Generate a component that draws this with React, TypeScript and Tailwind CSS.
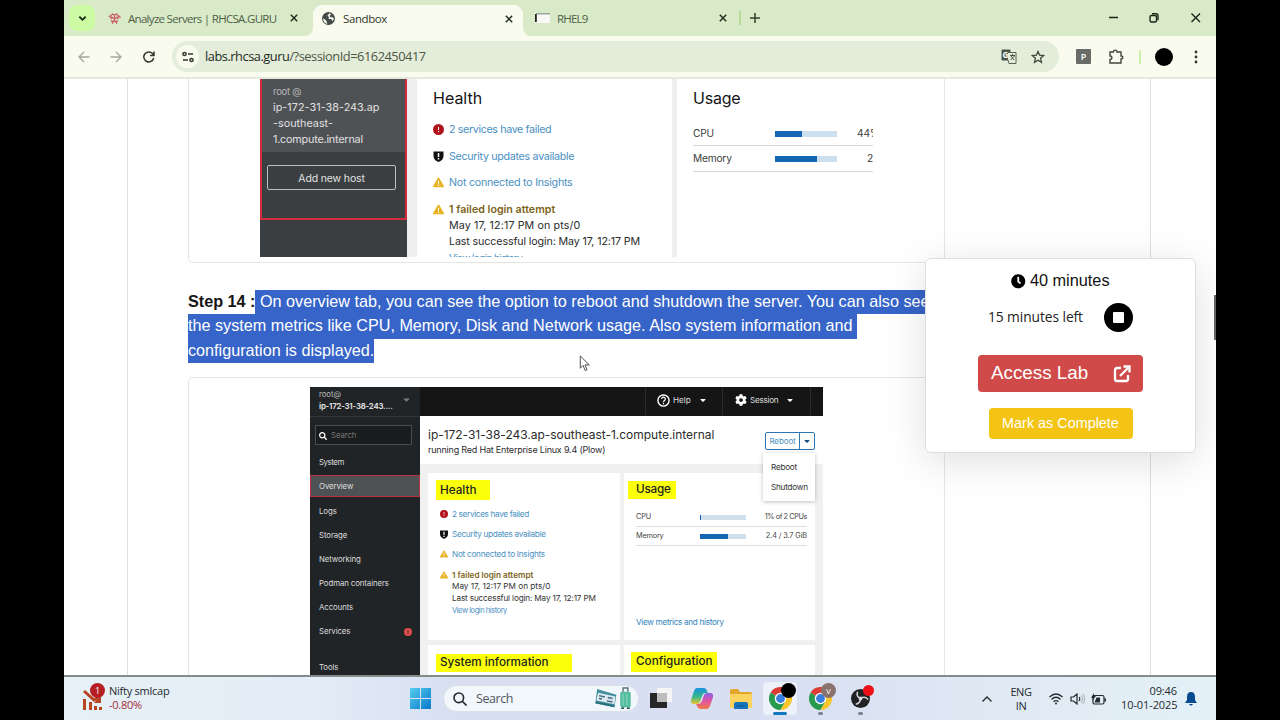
import type { ReactNode } from "react";
import { FaClock, FaCog, FaSearch } from "react-icons/fa";
import { FaCaretDown, FaCircleExclamation, FaTriangleExclamation } from "react-icons/fa6";

const navItems = ["Logs", "Storage", "Networking", "Podman containers", "Accounts"] as const;

function ShieldIcon({ className }: { className: string }) {
  return (
    <svg viewBox="0 0 20 22" className={className}>
      <path d="M0 1h20v9c0 6-4 10-10 12C4 20 0 16 0 10Z" fill="#111" />
      <path d="M8.5 4h3v8h-3zM8.5 14h3v3h-3z" fill="#fff" />
    </svg>
  );
}

function CloseIcon() {
  return (
    <svg viewBox="0 0 10 10" className="h-[8px] w-[8px] shrink-0">
      <path d="M1 1l8 8M9 1L1 9" stroke="#222b1e" strokeWidth="1.8" />
    </svg>
  );
}

function TabStrip() {
  return (
    <div className="flex h-9 items-center bg-[#d9eac9] text-[11.5px] text-[#4e5f46]">
      <div className="ml-[5px] flex h-[26px] w-[26px] items-center justify-center rounded-lg bg-[#cdfaa5]">
        <svg viewBox="0 0 10 10" className="h-[9px] w-[9px]" fill="none" stroke="#17210f" strokeWidth="2">
          <path d="M1.5 3l3.5 3.5L8.5 3" />
        </svg>
      </div>
      <svg viewBox="0 0 24 22" className="ml-[13px] h-[11px] w-[13px]" fill="none" stroke="#c9636b" strokeWidth="2.6">
        <path d="M1 8C3 4 7 5 8 2c3 2 6 2 8 0 1 3 5 2 7 6-3-1-5 0-6 1M1 8c3-1 5 0 6 1M4 12l4-3 4 3 4-3 4 3M6 14l2 6 4-6 4 6 2-6M12 5v5" />
      </svg>
      <span className="ml-[7px] w-[148px] pt-[2px] tracking-[-0.7px] whitespace-nowrap">Analyze Servers | RHCSA.GURU</span>
      <span className="ml-[14px]"><CloseIcon /></span>
      <div className="relative ml-[15px] flex h-[31px] w-[210px] items-center self-end rounded-t-[9px] bg-[#f9fbef] pr-[10px] pb-[4px] pl-[9px] text-[#30382b]">
        <svg viewBox="0 0 8 8" className="absolute bottom-0 -left-2 h-2 w-2"><path d="M8 0v8H0a8 8 0 0 0 8-8" fill="#f9fbef" /></svg>
        <svg viewBox="0 0 8 8" className="absolute -right-2 bottom-0 h-2 w-2"><path d="M0 0v8h8a8 8 0 0 1-8-8" fill="#f9fbef" /></svg>
        <svg viewBox="0 0 24 24" className="mb-px h-[13px] w-[13px]">
          <circle cx="12" cy="12" r="12" fill="#454b48" />
          <path d="M3 12l5 4 2 6c-5-1-8-5-8-9zM14 2l-4 5 3 2-1 4 5 0 3 4 2-5-3-3-3 1-2-3 3-2z" fill="#f9fbef" />
        </svg>
        <span className="ml-[8px] flex-1 pt-px tracking-[-0.4px]">Sandbox</span>
        <CloseIcon />
      </div>
      <svg viewBox="0 0 15 10" className="ml-[12px] h-[10px] w-[15px]">
        <path d="M0 0h15v10H0z" fill="#f8f8f6" />
        <path d="M1 0h14v1.500H1z" fill="#9aa59a" />
        <path d="M0 1h1.800v8H0z" fill="#222" />
      </svg>
      <span className="ml-[7px] w-[152px] pt-[2px] tracking-[-0.8px]">RHEL9</span>
      <span className="ml-[10px]"><CloseIcon /></span>
      <div className="ml-[12px] h-[14px] w-[2px] bg-[#b9dc95]" />
      <svg viewBox="0 0 10 10" className="ml-[9px] h-[10px] w-[10px]"><path d="M5 0v10M0 5h10" stroke="#33402c" strokeWidth="1.5" /></svg>
      <svg viewBox="0 0 92 12" className="ml-auto mr-[15px] h-[12px] w-[92px]" fill="none" stroke="#1c2417" strokeWidth="1.4">
        <path d="M0 5.500h9M82.500 1.500l8.500 8.500M91 1.500L82.500 10" />
        <rect x="41" y="3.5" width="6.5" height="6.5" rx="1.5" />
        <path d="M43 1.800h4a2 2 0 0 1 2 2v4.500" />
      </svg>
    </div>
  );
}

function Toolbar() {
  return (
    <div className="flex h-[41px] items-center bg-[#f9fbef]">
      <svg viewBox="0 0 12 12" className="ml-[14px] h-[12px] w-[12px]" fill="none" stroke="#a3a99b" strokeWidth="1.4"><path d="M11.500 6H1M6 1L1 6l5 5" /></svg>
      <svg viewBox="0 0 12 12" className="ml-[20px] h-[12px] w-[12px]" fill="none" stroke="#a3a99b" strokeWidth="1.4"><path d="M.5 6H11M6 1l5 5-5 5" /></svg>
      <svg viewBox="0 0 12 12" className="ml-[21px] h-[12px] w-[12px]" fill="none" stroke="#30382b" strokeWidth="1.5"><path d="M10.700 7A5 5 0 1 1 9.500 2.500L11 4M11 .5V4.500H7" /></svg>
      <div className="ml-[17px] flex h-[31px] w-[887px] items-center rounded-full bg-[#e4edda] pr-[14px] pl-[4px]">
        <div className="flex h-[23px] w-[23px] items-center justify-center rounded-full bg-[#f9fbef]">
          <svg viewBox="0 0 12 12" className="h-[12px] w-[12px]" fill="none" stroke="#30382b" strokeWidth="1.5">
            <circle cx="2.5" cy="3" r="1.6" /><circle cx="9.5" cy="9" r="1.6" /><path d="M6 3h5M1 9h5" />
          </svg>
        </div>
        <span className="ml-[6px] flex-1 pt-px text-[12.8px] tracking-[-0.46px] text-[#4d5746]"><span className="text-[#222a1d]">labs.rhcsa.guru</span>/?sessionId=6162450417</span>
        <svg viewBox="0 0 16 15" className="h-[15px] w-[16px]">
          <rect x=".5" y=".5" width="9" height="11" rx="1" fill="#4b5346" />
          <path d="M7 3.500h8v11H8L7 11" fill="#e4edda" stroke="#5a6255" />
          <text x="1.5" y="8.5" className="text-[8px] font-bold" fill="#fff">G</text>
          <path d="M9 6.500h5M11.500 5v1.500M10 7l3 4M13.500 7l-4 4" stroke="#4b5346" fill="none" />
        </svg>
        <svg viewBox="0 0 14 14" className="ml-[14px] h-[14px] w-[14px]" fill="none" stroke="#3f4839" strokeWidth="1.3">
          <path d="M7 1.500l1.600 3.700 4 .4-3 2.700.9 4L7 10.200l-3.500 2.100.9-4-3-2.700 4-.4Z" />
        </svg>
      </div>
      <div className="ml-[17px] flex h-[15px] w-[15px] items-center justify-center rounded-[1px] bg-[#686b66] text-[9px] font-semibold text-white">P</div>
      <svg viewBox="0 0 16 16" className="ml-[17px] h-[16px] w-[16px]" fill="none" stroke="#3f4839" strokeWidth="1.4">
        <path d="M2 3h3.500c0-2.500 3.500-2.500 3.500 0h4v4c2.500 0 2.500 3 0 3v4H2v-3.500c2.500 0 2.500-3.500 0-3.500Z" />
      </svg>
      <div className="ml-[15px] h-[14px] w-[2px] bg-[#cdf3ab]" />
      <div className="ml-[14px] h-[18px] w-[18px] rounded-full bg-black" />
      <svg viewBox="0 0 4 14" className="ml-[21px] h-[14px] w-[4px]" fill="#30382b"><circle cx="2" cy="2" r="1.4" /><circle cx="2" cy="7" r="1.4" /><circle cx="2" cy="12" r="1.4" /></svg>
    </div>
  );
}

function HostShot() {
  return (
    <div className="ml-[72px] flex h-[178px] w-[613px] overflow-hidden bg-[#eeeeee] font-['Inter']">
      <div className="h-full w-[147px] bg-[#3c3f42] text-[#e0e0e0]">
        <div className="h-[141px] border-2 border-t-0 border-[#d02c3c]">
          <div className="h-[73px] bg-[#4f5255] pt-[5px] pl-[11px] text-[10.8px] leading-4">
            <div className="text-[9.5px] tracking-[-0.25px] text-[#b5b7b9]">root @</div>
            <div><span className="tracking-[0.05px]">ip-172-31-38-243.ap</span><br />-southeast-<br /><span className="tracking-[-0.2px]">1.compute.internal</span></div>
          </div>
          <div className="mt-[13px] ml-[5px] flex h-[25px] w-[129px] items-center justify-center rounded-[2px] border border-[#bcbec0] pt-[2px] text-[10.5px] tracking-[-0.15px]">Add new host</div>
        </div>
      </div>
      <div className="ml-[10px] h-full w-[255px] bg-white pl-[16px] text-[10.7px] text-[#2b2b2b]">
        <h2 className="pt-[7px] text-[16px] leading-6 text-[#151515]">Health</h2>
        <div className="mt-[6px] flex h-[26.8px] items-center gap-[5px] tracking-[-0.36px] text-[#4a90c2]"><FaCircleExclamation className="size-[11px] text-[#b1121b]" /><span className="pt-px">2 services have failed</span></div>
        <div className="flex h-[26.8px] items-center gap-[5px] tracking-[-0.3px] text-[#4a90c2]"><ShieldIcon className="h-[11px] w-[11px]" /><span className="pt-px">Security updates available</span></div>
        <div className="flex h-[26.8px] items-center gap-[5px] tracking-[-0.25px] text-[#4a90c2]"><FaTriangleExclamation className="size-[11px] text-[#e7b325]" />Not connected to Insights</div>
        <div className="flex h-[26.8px] items-center gap-[5px] font-semibold text-[#7c6420]"><FaTriangleExclamation className="size-[11px] text-[#e7b325]" />1 failed login attempt</div>
        <div className="-mt-[5px] pl-[16px] leading-4 whitespace-nowrap"><span className="tracking-[0.12px]">May 17, 12:17 PM on pts/0</span><br /><span className="tracking-[-0.12px]">Last successful login: May 17, 12:17 PM</span><br /><span className="text-[10px] tracking-[-0.6px] text-[#4a90c2]">View login history</span></div>
      </div>
      <div className="ml-[5px] h-full w-[196px] bg-white pl-[16px] text-[10.2px] tracking-[-0.2px] text-[#3d3d3d]">
        <h2 className="pt-[7px] text-[16px] leading-6 text-[#151515]">Usage</h2>
        <div className="mt-[11px] flex h-[25px] items-center border-b border-[#d8d8d8]">
          <span className="w-[82px] shrink-0 pt-px">CPU</span><div className="mt-px h-[6px] w-[62px] shrink-0 bg-[#cce0f0]"><div className="h-full w-[27px] bg-[#1467b3]" /></div><span className="ml-[20px] w-[16px] overflow-hidden pt-px">44%</span>
        </div>
        <div className="flex h-[26px] items-center border-b border-[#d8d8d8]">
          <span className="w-[82px] shrink-0 pt-px">Memory</span><div className="h-[6px] w-[62px] shrink-0 bg-[#cce0f0]"><div className="h-full w-[42px] bg-[#1467b3]" /></div><span className="ml-auto pt-px">2</span>
        </div>
      </div>
    </div>
  );
}

function Mark({ className, children }: { className: string; children: ReactNode }) {
  return <h2 className={`flex items-center bg-[#fbff0a] text-[11.7px] font-medium whitespace-nowrap text-[#222] ${className}`}>{children}</h2>;
}

function OverviewShot() {
  return (
    <div className="relative ml-[121px] flex h-[288px] w-[513px] overflow-hidden bg-[#f0f0f0] font-['Inter']">
      <aside className="h-full w-[110px] bg-[#212427] text-[7.8px] tracking-[-0.08px] text-[#dddddd]">
        <div className="relative h-[30px] border-b border-[#34373a] pt-px pl-[9px] leading-[12px]">
          <div className="text-[#bbb]">root@</div>
          <div className="font-bold tracking-[-0.22px]">ip-172-31-38-243....</div>
          <FaCaretDown className="absolute top-[8px] right-[9px] size-[9px] text-[#777]" />
        </div>
        <div className="mt-[8px] ml-[5px] flex h-[20px] w-[97px] items-center gap-[4px] border border-[#494c4f] bg-[#1a1c1e] pt-px pl-[3px] text-[#777]"><FaSearch className="size-[8px] text-white" />Search</div>
        <div className="mt-[11px] ml-[9px] leading-[13px] tracking-[-0.4px]">System</div>
        <div className="mt-[6px] flex h-[22px] items-center border-[1.5px] border-[#bd3243] bg-[#4f5255] pt-px pl-[8px]">Overview</div>
        <div className="mt-[2.5px]">
          {navItems.map((item) => <div key={item} className="flex h-[24.1px] items-center pl-[9px]">{item}</div>)}
          <div className="flex h-[24.1px] items-center justify-between pr-[8px] pl-[9px]">Services<FaCircleExclamation className="size-[8px] text-[#e04b4b]" /></div>
        </div>
        <div className="mt-[17.5px] ml-[9px]">Tools</div>
      </aside>
      <div className="flex-1">
        <div className="flex h-[29px] items-center bg-[#151515] pb-[3px] text-[8.2px] tracking-[-0.05px] text-[#ddd]">
          <div className="ml-[225px] flex h-[29px] w-[77px] items-center border-l border-[#2c2c2c] pl-[11px]">
            <svg viewBox="0 0 14 14" className="mr-[3px] h-[13px] w-[13px]"><circle cx="7" cy="7" r="6" fill="none" stroke="#fff" strokeWidth="1.5" /><path d="M5 5.500c0-3 4-2.500 4 0C9 7 7 6.800 7 8.500M7 9.500v1.500" fill="none" stroke="#fff" strokeWidth="1.3" /></svg>
            Help<FaCaretDown className="ml-[8px] size-[8px] text-white" />
          </div>
          <div className="flex h-[29px] w-[89px] items-center border-x border-[#2c2c2c] pl-[12px]"><FaCog className="mr-[3px] size-[12px] text-white" /><span className="tracking-[-0.3px]">Session</span><FaCaretDown className="ml-[8px] size-[8px] text-white" /></div>
        </div>
        <div className="flex h-[48px] justify-between bg-white pr-[8px] pl-[8px]">
          <div className="pt-[10px] whitespace-nowrap text-[#2c2c2c]">
            <div className="text-[12px] leading-[17px] tracking-[-0.03px]">ip-172-31-38-243.ap-southeast-1.compute.internal</div>
            <div className="text-[9px] leading-[14px] tracking-[-0.2px]">running Red Hat Enterprise Linux 9.4 (Plow)</div>
          </div>
          <div className="mt-[16px] flex h-[18px] w-[50px] items-center rounded-[2px] border-[1.5px] border-[#2d75b3] text-[8px] tracking-[-0.1px] text-[#4a90c2]">
            <span className="flex h-full w-[34px] items-center justify-center border-r border-[#2d75b3]">Reboot</span><FaCaretDown className="mx-auto size-[8px] text-[#174e80]" />
          </div>
        </div>
        <div className="grid grid-cols-[192px_191px] grid-rows-[167px_60px] gap-x-[4px] gap-y-[5px] pt-[9px] pl-[8px]">
          <section className="bg-white pt-[7px] pl-[8px] text-[8.2px] text-[#333]">
            <Mark className="h-[20px] w-[54px] pt-px pl-[4px]">Health</Mark>
            <div className="pt-[4px] pl-[4px]">
              <div className="flex h-[20.2px] items-center gap-[4px] tracking-[-0.34px] text-[#4a90c2]"><FaCircleExclamation className="size-[8px] text-[#b1121b]" />2 services have failed</div>
              <div className="flex h-[20.2px] items-center gap-[4px] tracking-[-0.32px] text-[#4a90c2]"><ShieldIcon className="h-[9px] w-[8px]" />Security updates available</div>
              <div className="flex h-[20.2px] items-center gap-[4px] tracking-[-0.26px] text-[#4a90c2]"><FaTriangleExclamation className="size-[8px] text-[#e7b325]" />Not connected to Insights</div>
              <div className="flex h-[20.2px] items-center gap-[4px] font-semibold text-[#7c6420]"><FaTriangleExclamation className="size-[8px] text-[#e7b325]" />1 failed login attempt</div>
              <div className="-mt-[5px] pl-[12px] leading-[12.2px] whitespace-nowrap"><span>May 17, 12:17 PM on pts/0</span><br /><span className="tracking-[-0.16px]">Last successful login: May 17, 12:17 PM</span><br /><span className="text-[7.5px] tracking-[-0.45px] text-[#4a90c2]">View login history</span></div>
            </div>
          </section>
          <section className="bg-white pt-[8px] pl-[4px] text-[7.3px] tracking-[-0.18px] text-[#444]">
            <Mark className="h-[18px] w-[48px] pl-[8px]">Usage</Mark>
            <div className="mt-[9px] ml-[8px] flex h-[19px] w-[171px] items-center border-b border-[#ddd]"><span className="w-[64px]">CPU</span><div className="h-[5px] w-[46px] bg-[#cfdfec]"><div className="h-full w-px bg-[#1467b3]" /></div><span className="ml-auto tracking-[-0.4px]">1% of 2 CPUs</span></div>
            <div className="ml-[8px] flex h-[19px] w-[171px] items-center border-b border-[#ddd]"><span className="w-[64px]">Memory</span><div className="h-[5px] w-[46px] bg-[#cfdfec]"><div className="h-full w-[28px] bg-[#1467b3]" /></div><span className="ml-auto tracking-[-0.1px]">2.4 / 3.7 GiB</span></div>
            <div className="mt-[70px] ml-[8px] text-[8.2px] tracking-[-0.33px] text-[#3585bd]">View metrics and history</div>
          </section>
          <section className="bg-white pt-[9px] pl-[8px]"><Mark className="h-[18px] w-[136px] pb-px pl-[4px]">System information</Mark></section>
          <section className="bg-white pt-[7px] pl-[7px]"><Mark className="h-[20px] w-[86px] pl-[5px]">Configuration</Mark></section>
        </div>
      </div>
      <div className="absolute top-[66px] right-[8px] flex h-[48px] w-[52px] flex-col gap-[8px] bg-white pt-[8px] pl-[8px] text-[8.2px] leading-[12px] tracking-[-0.25px] text-[#333] shadow-[0_1px_4px_rgba(0,0,0,0.25)]"><span>Reboot</span><span>Shutdown</span></div>
    </div>
  );
}

function TimerPanel() {
  return (
    <div className="absolute top-[179px] left-[861px] flex h-[195px] w-[271px] flex-col items-center rounded-[6px] border border-[#dedede] bg-white pt-[9px] font-['Liberation_Sans'] shadow-[0_8px_40px_rgba(0,0,0,0.13)]">
      <div className="flex h-6 items-center gap-[4px] text-[16.3px] text-[#111]"><FaClock className="mt-[3px] size-[14.5px] text-black" />40 minutes</div>
      <div className="mt-[10px] flex h-[30px] items-center font-['Open_Sans'] text-[13.8px] tracking-[-0.08px] text-[#222]">
        <span className="w-[94px] pt-px whitespace-nowrap">15 minutes left</span>
        <div className="ml-[22px] flex h-[29px] w-[29px] items-center justify-center rounded-full bg-black"><div className="h-[11px] w-[11px] rounded-[1px] bg-white" /></div>
      </div>
      <button className="mt-[23px] flex h-[37px] w-[165px] items-center justify-between rounded-[4px] bg-[#cf4a48] pr-[12px] pl-[13px] text-[18.8px] text-white">
        Access Lab
        <svg viewBox="0 0 18 18" className="h-[18px] w-[18px]" fill="none" stroke="#fff" strokeWidth="2.3">
          <path d="M8 3H4Q2 3 2 5v9q0 2 2 2h9q2 0 2-2v-4M7 11L15.500 2.500" /><path d="M10.500 1.500h6v6" />
        </svg>
      </button>
      <button className="mt-[16px] h-[31px] w-[144px] rounded-[4px] bg-[#f4c414] text-[14.4px] text-white">Mark as Complete</button>
    </div>
  );
}

function Page() {
  return (
    <div className="relative h-[596px] overflow-hidden bg-white">
      <div className="ml-[63px] h-full w-[1024px] border-x border-[#dedede] pl-[60px]">
        <div className="h-[184px] w-[757px] rounded-b-[5px] border border-t-0 border-[#e6e6e6]"><div className="-ml-px"><HostShot /></div></div>
        <div className="mt-[27px] flex h-[73px] flex-col items-start font-['Liberation_Sans'] text-[16.2px] leading-[22.3px] whitespace-nowrap text-[#151515]">
          <p className="flex"><b>Step 14 :</b><span className="bg-[#3664c8] pb-[2px] text-white">&nbsp;On overview tab, you can see the option to reboot and shutdown the server. You can also see</span></p>
          <p className="bg-[#3664c8] pr-[4px] pb-[2px] text-white">the system metrics like CPU, Memory, Disk and Network usage. Also system information and</p>
          <p className="bg-[#3664c8] pb-[2px] text-white">configuration is displayed.</p>
        </div>
        <div className="mt-[14px] h-[310px] w-[757px] rounded-t-[5px] border border-[#e6e6e6] pt-[9px]"><OverviewShot /></div>
      </div>
      <div className="absolute top-[216px] right-0 h-[45px] w-[2px] bg-[#666]" />
      <TimerPanel />
      <svg viewBox="0 0 12 18" className="absolute top-[276px] left-[515px] h-[17px] w-[12px]"><path d="M1 1v13l3-3 2.200 5.500 2-.8L6 10.500h4.500Z" fill="#fff" stroke="#444" strokeWidth="1" /></svg>
    </div>
  );
}

function ChromeLogo({ badge, badgeClass }: { badge: string; badgeClass: string }) {
  return (
    <div className="relative h-[23px] w-[23px]">
      <svg viewBox="0 0 24 24" className="h-full w-full">
        <path d="M12 12L1.600 6A12 12 0 0 1 22.400 6Z" fill="#db3d36" />
        <path d="M12 12L1.600 6A12 12 0 0 0 12 24l5.200-9Z" fill="#279a4e" />
        <path d="M12 6h10.400A12 12 0 0 1 12 24l5.200-9Z" fill="#fac629" />
        <circle cx="12" cy="12" r="6" fill="#fff" /><circle cx="12" cy="12" r="4.6" fill="#387de0" />
      </svg>
      <div className={`absolute -top-[4px] -right-[4px] flex h-[15px] w-[15px] items-center justify-center rounded-full text-[8px] text-white ${badgeClass}`}>{badge}</div>
    </div>
  );
}

function Taskbar() {
  return (
    <div className="flex h-[45px] items-center border-t-2 border-[#858a8b] bg-[linear-gradient(90deg,#e5f0f7_0%,#e2edf7_22%,#d7dff1_34%,#d8dff2_63%,#dfe9f4_79%,#e4f0f7_100%)] text-[#252a2e]">
      <div className="relative ml-[17px] h-[29px] w-[24px]">
        <svg viewBox="0 0 24 29" className="h-full w-full"><path d="M2 26V15h3v11zM8 26v-8h3v8zM13 26v-4h3v4zM18 26v-3h3v3z" fill="#b94422" /><path d="M3 7l10 9 4-2" fill="none" stroke="#b94422" strokeWidth="3" /><path d="M20 11v8h-7z" fill="#b94422" /></svg>
        <div className="absolute -top-px right-0 flex h-[15px] w-[15px] items-center justify-center rounded-full bg-[#b61e24] text-[9px] text-white">1</div>
      </div>
      <div className="ml-[4px] w-[80px] pb-px text-[11px] leading-[14px] tracking-[-0.25px] whitespace-nowrap"><div>Nifty smlcap</div><div className="text-[#a52c3a]">-0.80%</div></div>
      <svg viewBox="0 0 21 21" className="ml-[220.5px] h-[21px] w-[21px]">
        <defs><linearGradient id="win" x1="0" y1="0" x2="1" y2="1"><stop stopColor="#55cdf2" /><stop offset="1" stopColor="#0878c9" /></linearGradient></defs>
        <path d="M0 0h10v10H0zM11 0h10v10H11zM0 11h10v10H0zM11 11h10v10H11z" fill="url(#win)" />
      </svg>
      <div className="ml-[12.5px] flex h-[27px] w-[196px] items-center rounded-full border border-[#dbe0e7] bg-[#f2f7fc] pr-[6px] pl-[9px] text-[12.5px] tracking-[-0.45px] text-[#50565d]">
        <svg viewBox="0 0 14 14" className="h-[14px] w-[14px]" fill="none" stroke="#22272b" strokeWidth="1.6"><circle cx="5.8" cy="5.8" r="4.8" /><path d="M9.500 9.500L13.500 13.500" /></svg>
        <span className="ml-[9px] flex-1 pt-px">Search</span>
        <svg viewBox="0 0 39 24" className="h-[23px] w-[38px]">
          <path d="M3 2l20 6-2 13-20-4Z" fill="#438f9e" /><path d="M4 6l18 4-1 8-19-4Z" fill="#dce9ef" /><path d="M2 15l19 4v2L1 17Z" fill="#28717e" /><path d="M5 9l6 1.500M14 11l5 1M5 12l3 .6M13 14.500l6 1.200" stroke="#426a81" strokeWidth="1.5" />
          <rect x="27" y="5" width="11" height="16" rx="2" fill="#55bd9e" /><path d="M30 5V1h5v4" fill="none" stroke="#56737a" strokeWidth="1.5" /><path d="M30 7v12M34 7v12" stroke="#8edbc4" /><path d="M28 21h3v2h-3zM34 21h3v2h-3z" fill="#335e61" />
        </svg>
      </div>
      <svg viewBox="0 0 22 21" className="ml-[11px] h-[21px] w-[22px]"><path d="M0 5h17v15H0z" fill="#272727" /><path d="M7 0h15v14H7z" fill="#f5f5f5" /><path d="M7 5h10v9H7z" fill="#bdbdbd" /></svg>
      <svg viewBox="0 0 22 21" className="ml-[19px] h-[21px] w-[22px]">
        <defs><linearGradient id="cop" x1="0" y1="0" x2="0" y2="1"><stop stopColor="#1692df" /><stop offset=".55" stopColor="#37b789" /><stop offset="1" stopColor="#edc32e" /></linearGradient><linearGradient id="cop2" x1="0" y1="0" x2="0" y2="1"><stop stopColor="#8a62e8" /><stop offset=".5" stopColor="#e252a0" /><stop offset="1" stopColor="#f07b45" /></linearGradient></defs>
        <path d="M6 0h7q2 0 2.500 2L17 5h-3q-2 0-3 3l-2 6q-1 2-3 2H3q-4 0-3-4L3 3q1-3 3-3Z" fill="url(#cop)" />
        <path d="M16 5h3q4 0 3 4l-3 9q-1 3-3 3H9q-2 0-3-3l-1-2h3q2 0 3-3l2-6q1-2 3-2Z" fill="url(#cop2)" />
      </svg>
      <svg viewBox="0 0 22 20" className="ml-[17px] h-[20px] w-[22px]"><path d="M0 2q0-2 2-2h6l2 3h10q2 0 2 2v14H0Z" fill="#e2a72a" /><path d="M0 5h22v14H0Z" fill="#fbd35e" /><path d="M4 20v-5q0-2 2-2h10q2 0 2 2v5Z" fill="#1675bb" /><path d="M7 17h8" stroke="#0b568d" /></svg>
      <div className="relative ml-[11px] flex h-[33px] w-[34px] items-center justify-center rounded-[4px] bg-[#edf2fa]"><ChromeLogo badge="" badgeClass="bg-black" /><div className="absolute bottom-0 h-[3px] w-[14px] rounded-full bg-[#1779bd]" /></div>
      <div className="relative ml-[12px] flex h-[33px] w-[23px] items-center justify-center"><ChromeLogo badge="V" badgeClass="bg-[#8a716d]" /><div className="absolute bottom-0 h-[3px] w-[5px] rounded-full bg-[#7d8292]" /></div>
      <div className="relative ml-[19px] flex h-[33px] w-[19px] items-center justify-center">
        <svg viewBox="0 0 20 20" className="h-[19px] w-[19px]"><circle cx="10" cy="10" r="10" fill="#202124" /><path d="M10 10Q5 8 7 3M10 10q5-3 8 1M10 10q0 5-5 6" fill="none" stroke="#d5d5d5" strokeWidth="1.6" /><circle cx="10" cy="10" r="2" fill="#d5d5d5" /></svg>
        <div className="absolute top-[3px] -right-[4px] h-[11px] w-[11px] rounded-full bg-[#ee1018]" /><div className="absolute bottom-0 h-[3px] w-[5px] rounded-full bg-[#7d8292]" />
      </div>
      <svg viewBox="0 0 10 6" className="ml-auto h-[6px] w-[10px]" fill="none" stroke="#252a2e" strokeWidth="1.3"><path d="M.5 5.500L5 1l4.500 4.500" /></svg>
      <div className="ml-[18px] w-[22px] text-center text-[11px] leading-[14px] tracking-[-0.4px]">ENG<br />IN</div>
      <svg viewBox="0 0 14 12" className="ml-[17px] h-[12px] w-[14px]" fill="none" stroke="#252a2e" strokeWidth="1.2"><path d="M.5 4Q7-2 13.500 4M2.500 6.500Q7 2 11.500 6.500M4.500 8.800Q7 6.500 9.500 8.800" /><circle cx="7" cy="10.5" r="1" fill="#252a2e" stroke="none" /></svg>
      <svg viewBox="0 0 15 12" className="ml-[7px] h-[12px] w-[15px]" fill="none" stroke="#252a2e" strokeWidth="1.2"><path d="M1 4h2.500L7 1v10L3.500 8H1ZM9 4q1.500 2 0 4" /><path d="M11 2.500q3 3.500 0 7M13 1q3 5 0 10" stroke="#b3bbc1" /></svg>
      <svg viewBox="0 0 15 12" className="ml-[6px] h-[12px] w-[15px]"><rect x="2" y="2.5" width="11" height="8.5" rx="1.5" fill="none" stroke="#252a2e" strokeWidth="1.2" /><path d="M3.500 9.500l2-5h3.500v5ZM13.500 5.500H15v3h-1.500ZM3 0L0 5h2L1 8l4-5H3Z" fill="#252a2e" /></svg>
      <div className="ml-[15px] w-[56px] pb-px text-right text-[11px] leading-[14px] tracking-[-0.1px] whitespace-nowrap">09:46<br />10-01-2025</div>
      <svg viewBox="0 0 12 14" className="mr-[19px] ml-[8px] h-[14px] w-[12px]" fill="#064a91"><path d="M6 0Q10 0 10 5v3l2 3H0l2-3V5Q2 0 6 0ZM4 12h4q-2 3-4 0" /></svg>
    </div>
  );
}

export default function App() {
  return (
    <main className="h-[720px] w-[1280px] overflow-hidden bg-black px-16 font-['Open_Sans',sans-serif]">
      <TabStrip />
      <Toolbar />
      <div className="h-[2px] bg-[#e4e9dc]" />
      <Page />
      <Taskbar />
    </main>
  );
}
